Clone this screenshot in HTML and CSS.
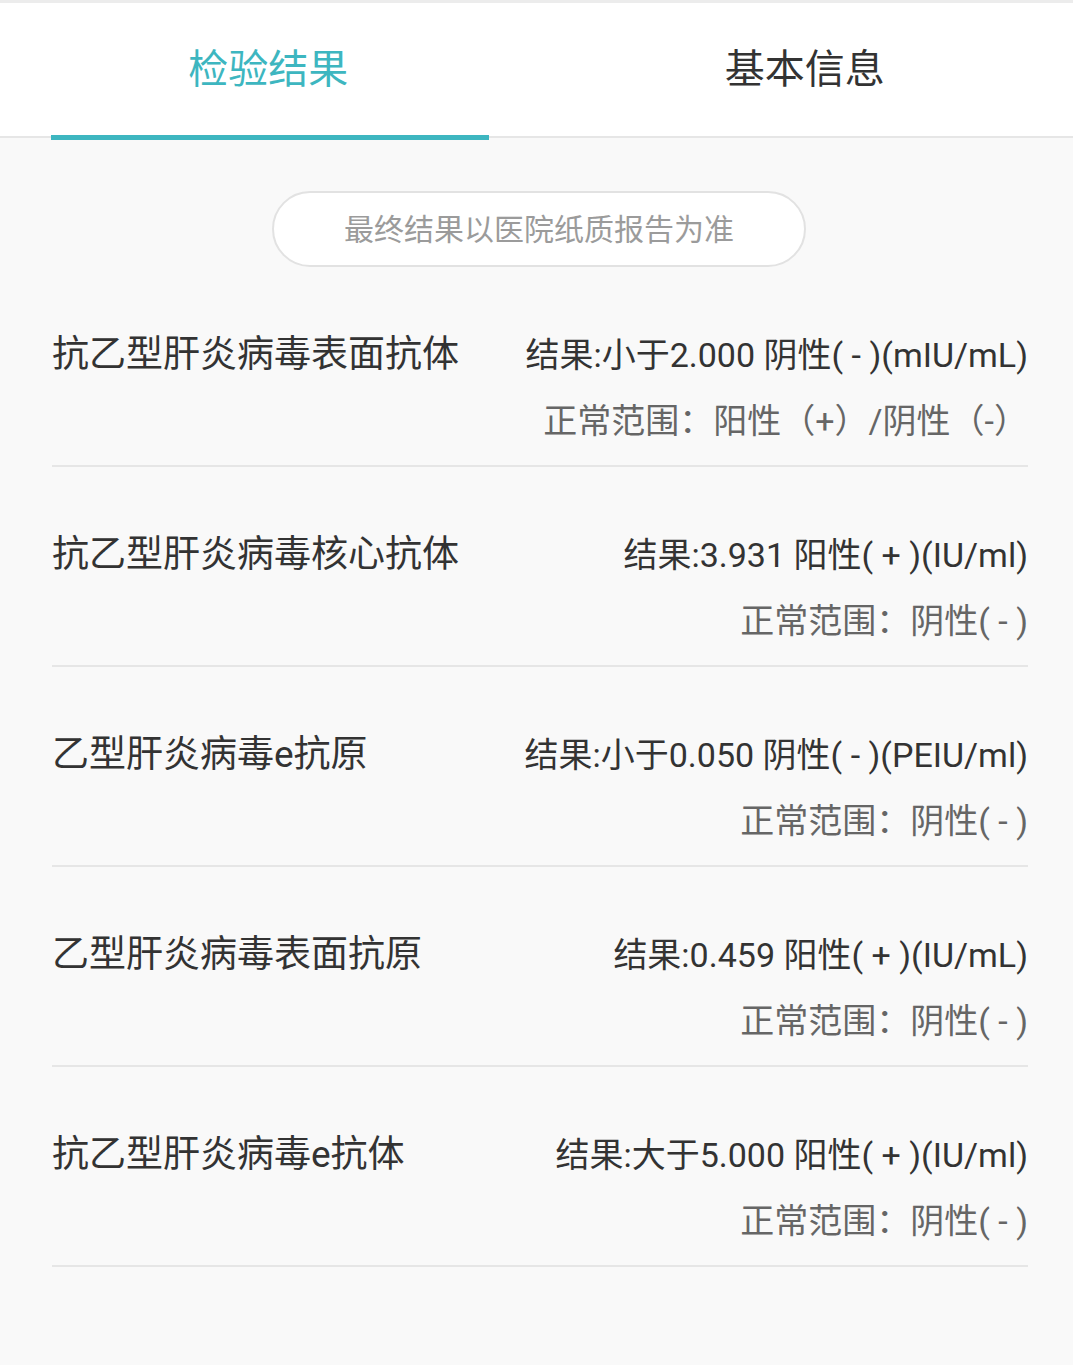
FILE: index.html
```html
<!DOCTYPE html>
<html lang="zh-CN">
<head>
<meta charset="utf-8">
<title>检验结果</title>
<link rel="stylesheet" href="styles.css">
</head>
<body>
<div class="topstrip"></div>
<header class="tabs">
  <div class="tab active">检验结果<span class="underline"></span></div>
  <div class="tab">基本信息</div>
</header>
<main class="content">
  <div class="notice">最终结果以医院纸质报告为准</div>
  <ul class="list">
    <li class="row">
      <div class="name">抗乙型肝炎病毒表面抗体</div>
      <div class="values">
        <div class="result">结果:小于2.000 阴性( - )(mIU/mL)</div>
        <div class="range">正常范围：阳性（+）/阴性（-）</div>
      </div>
    </li>
    <li class="row">
      <div class="name">抗乙型肝炎病毒核心抗体</div>
      <div class="values">
        <div class="result">结果:3.931 阳性( + )(IU/ml)</div>
        <div class="range">正常范围：阴性( - )</div>
      </div>
    </li>
    <li class="row">
      <div class="name">乙型肝炎病毒e抗原</div>
      <div class="values">
        <div class="result">结果:小于0.050 阴性( - )(PEIU/ml)</div>
        <div class="range">正常范围：阴性( - )</div>
      </div>
    </li>
    <li class="row">
      <div class="name">乙型肝炎病毒表面抗原</div>
      <div class="values">
        <div class="result">结果:0.459 阳性( + )(IU/mL)</div>
        <div class="range">正常范围：阴性( - )</div>
      </div>
    </li>
    <li class="row">
      <div class="name">抗乙型肝炎病毒e抗体</div>
      <div class="values">
        <div class="result">结果:大于5.000 阳性( + )(IU/ml)</div>
        <div class="range">正常范围：阴性( - )</div>
      </div>
    </li>
  </ul>
</main>
</body>
</html>
```
FILE: styles.css
```css
html, body {
  margin: 0;
  padding: 0;
}
body {
  background: #f9f9f9;
  font-family: Roboto, "Noto Sans CJK SC", sans-serif;
  color: #333;
  width: 1073px;
  min-height: 1365px;
}
.topstrip {
  height: 3px;
  background: #ececec;
}
.tabs {
  display: flex;
  background: #fff;
  border-bottom: 2px solid #e6e6e6;
}
.tab {
  position: relative;
  flex: 1 1 0;
  height: 125px;
  padding-bottom: 8px;
  display: flex;
  align-items: center;
  justify-content: center;
  font-size: 40px;
  color: #333;
}
.tab.active {
  color: #3db6c0;
}
.underline {
  position: absolute;
  left: 51px;
  right: 48px;
  bottom: -4px;
  height: 5px;
  background: #3db6c0;
}
.content {
  padding: 53px 45px 0 52px;
}
.notice {
  width: 530px;
  height: 68px;
  padding-bottom: 4px;
  margin: 0 auto 0 220px;
  border: 2px solid #e2e2e2;
  border-radius: 40px;
  background: #fff;
  display: flex;
  align-items: center;
  justify-content: center;
  font-size: 30px;
  color: #9b9b9b;
}
.list {
  list-style: none;
  margin: 0;
  padding: 0;
}
.row {
  display: flex;
  justify-content: space-between;
  padding: 63px 0 22px;
  border-bottom: 2px solid #e6e6e6;
}
.name {
  font-size: 37px;
  line-height: 50px;
  color: #333;
  white-space: nowrap;
}
.values {
  display: flex;
  flex-direction: column;
  align-items: flex-end;
  gap: 19px;
}
.result {
  font-size: 34px;
  line-height: 50px;
  color: #333;
  white-space: nowrap;
}
.range {
  font-size: 34px;
  line-height: 44px;
  color: #666;
  white-space: nowrap;
}
```
